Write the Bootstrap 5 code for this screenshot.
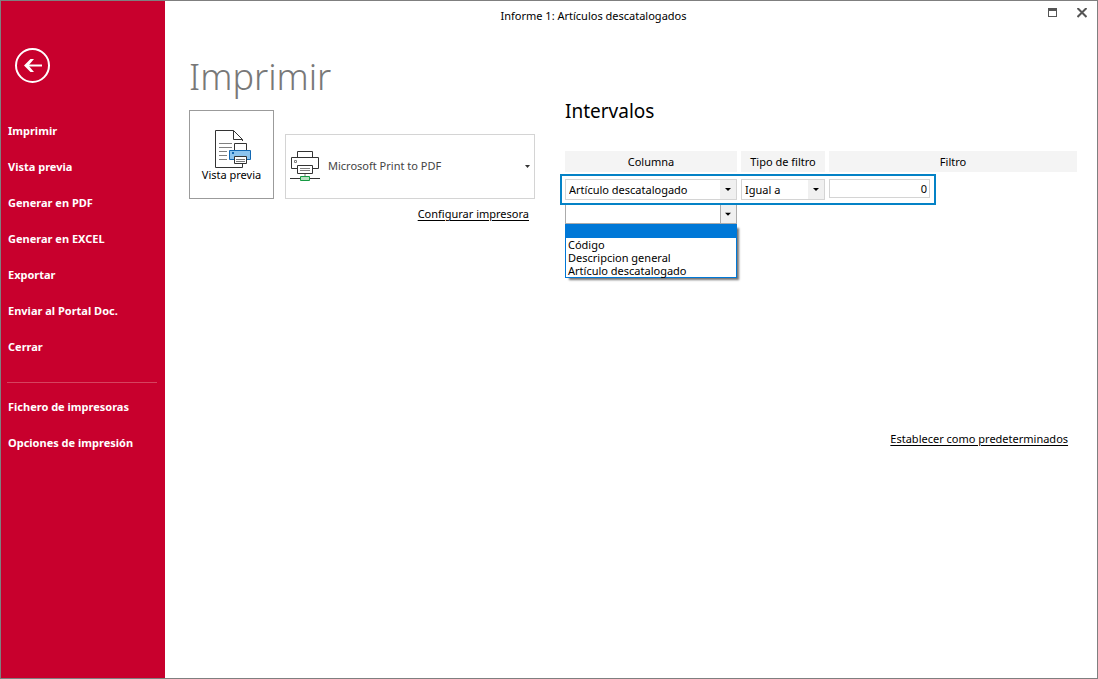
<!DOCTYPE html>
<html lang="es">
<head>
<meta charset="utf-8">
<meta name="viewport" content="width=device-width, initial-scale=1">
<title>Informe 1: Artículos descatalogados</title>
<link href="https://cdn.jsdelivr.net/npm/bootstrap@5.3.0/dist/css/bootstrap.min.css" rel="stylesheet">
<style>
  body { font-family: "Noto Sans", "Open Sans", sans-serif; font-size: 11px; line-height: 18px; color: #000; }
  .app-window { border: 1px solid #7f7f7f; }
  .side-menu { width: 164px; flex-shrink: 0; background: #c8002d; padding-top: 47px; }
  .back-btn { width: 35px; height: 35px; margin: 0 0 30px 14px; }
  .side-menu .nav-link { color: #fff; font-weight: 700; padding: 9px 7px; }
  .side-menu hr { margin: 17px 8px 6px 6px; border-top: 1px solid #e07080; opacity: .6; }
  .title-bar { height: 30px; }
  .window-controls { width: 75px; }
  .window-controls .btn { width: 30px; padding-top: 7px; }
  .content-area { padding: 20px 20px 0 24px; gap: 30px; }
  .print-pane { width: 346px; flex-shrink: 0; }
  .print-pane h1 { font-size: 36px; font-weight: 300; line-height: 48px; color: #787878; margin: 2px 0 9px; }
  .preview-btn { width: 85px; height: 89px; border: 1px solid #9b9b9b; padding: 18px 0 0; font-size: 11px; line-height: 12px; color: #000; }
  .preview-btn svg { margin-left: 2px; }
  .printer-btn { width: 250px; height: 65px; border: 1px solid #d4d4d4; color: #444; font-size: 11px; padding: 0 4px 1px; }
  .config-row { padding: 6px 6px 0 0; }
  .plain-link { color: #000; text-decoration: underline; text-underline-offset: 2px; }
  .filter-pane h2 { font-size: 19px; font-weight: 400; line-height: 28px; margin: 46px 0 26px; }
  .filter-table { width: calc(100% + 8px); margin: 0 -4px; table-layout: fixed; border-collapse: separate; border-spacing: 4px 0; }
  .filter-table th { height: 21px; padding: 0; background: #f4f4f4; font-weight: 400; text-align: center; }
  .filter-table td { padding: 7px 0 0; vertical-align: top; }
  .filter-table tr:last-child td { padding-top: 4px; }
  .col-column { width: 172px; }
  .col-type { width: 84px; }
  .combo { display: block; width: 100%; height: 21px; border: 1px solid #d4d4d4; border-radius: 0; padding: 0 18px 0 3px; appearance: none; color: #000; outline: 0;
    background: url("data:image/svg+xml,%3Csvg xmlns='http://www.w3.org/2000/svg' width='16' height='19'%3E%3Cpath fill='%23f0f0f0' d='M0 0h16v19H0z'/%3E%3Cpath d='M5 8h6L8 11z'/%3E%3C/svg%3E") right center no-repeat #fff; }
  .combo-open { height: 20px; border-color: #ababab;
    background-image: url("data:image/svg+xml,%3Csvg xmlns='http://www.w3.org/2000/svg' width='16' height='19'%3E%3Cpath fill='%23f0f0f0' d='M0 0h16v19H0z'/%3E%3Cpath fill='%23ababab' d='M0 0h1v19H0z'/%3E%3Cpath d='M5 8h6L8 11z'/%3E%3C/svg%3E"); }
  .filter-value { display: block; width: 101px; height: 19px; border: 1px solid #d4d4d4; padding: 0 2px; text-align: right; outline: 0; }
  .row-focus { left: -5px; top: 2px; width: 376px; height: 31px; border: 2px solid #0482c6; pointer-events: none; z-index: 2; }
  .combo-list { left: 0; top: 100%; width: 100%; border: 1px solid #0078d7; box-shadow: 3px 3px 2px -1px rgba(0,0,0,.55); z-index: 3; line-height: 13px; }
  .combo-list li { padding-left: 2px; height: 13px; }
  .combo-list li.chosen { background: #0078d7; }
  .defaults-link { margin: 206px 9px 0 0; }
</style>
</head>
<body>
<div class="app-window d-flex min-vh-100 bg-white">
  <nav class="side-menu" aria-label="Menú de impresión">
    <button type="button" class="back-btn btn p-0 border-0 d-block" aria-label="Volver">
      <svg class="d-block" width="35" height="35" viewBox="0 0 35 35" fill="none" stroke="#fff"><circle cx="17.500" cy="17.500" r="16.500" stroke-width="2"/><path d="M27 17.500H11" stroke-width="2"/><path d="M9 17.500L15.500 11H19L13.500 17.500L19 24H15.500Z" fill="#fff" stroke="none"/></svg>
    </button>
    <div class="nav flex-column">
      <a class="nav-link" href="#">Imprimir</a>
      <a class="nav-link" href="#">Vista previa</a>
      <a class="nav-link" href="#">Generar en PDF</a>
      <a class="nav-link" href="#">Generar en EXCEL</a>
      <a class="nav-link" href="#">Exportar</a>
      <a class="nav-link" href="#">Enviar al Portal Doc.</a>
      <a class="nav-link" href="#">Cerrar</a>
    </div>
    <hr>
    <div class="nav flex-column">
      <a class="nav-link" href="#">Fichero de impresoras</a>
      <a class="nav-link" href="#">Opciones de impresión</a>
    </div>
  </nav>

  <div class="flex-fill">
    <header class="title-bar d-flex align-items-center">
      <div class="flex-fill text-center">Informe 1: Artículos descatalogados</div>
      <div class="window-controls d-flex align-items-start justify-content-end h-100">
        <button type="button" class="btn px-0 pb-0 border-0 rounded-0 d-flex justify-content-center" aria-label="Maximizar"><svg width="10" height="10" viewBox="0 0 10 10" shape-rendering="crispEdges"><path d="M1 0h9v9H1zM2 3v5h7V3z" fill="#555" fill-rule="evenodd"/></svg></button>
        <button type="button" class="btn px-0 pb-0 border-0 rounded-0 d-flex justify-content-center" aria-label="Cerrar ventana"><svg width="10" height="10" viewBox="0 0 10 10"><path d="M.5 0L9.500 9M9.500 0L.5 9" stroke="#555" stroke-width="2"/></svg></button>
      </div>
    </header>

    <main class="content-area d-flex">
      <section class="print-pane">
        <h1>Imprimir</h1>
        <div class="d-flex justify-content-between align-items-end">
          <button type="button" class="preview-btn bg-white d-flex flex-column align-items-center">
            <svg width="37" height="40" viewBox="0 0 37 40" fill="none" stroke="#333">
              <path d="M28.500 12V10.500L19.500 1.500H1.500V38.500H28.500V34" fill="#fff"/>
              <path d="M19.500 1.500V10.500H28.500"/>
              <path d="M5 14.500H18M5 18.500H18M5 22.500H13M5 26.500H13M5 30.500H13" stroke="#808080"/>
              <path d="M20.500 21V14.500H32.500V21" fill="#fff"/>
              <path d="M15.500 21.500H36.500V30.500H15.500Z" fill="#8cc4ee" stroke="#1268b3"/>
              <path d="M18 23h2v2h-2z" fill="#1268b3" stroke="none"/>
              <path d="M20.500 27.500H32.500V34.500H20.500Z" fill="#fff"/>
              <path d="M22 30.500H31M22 32.500H31" stroke="#777"/>
            </svg>
            <span>Vista previa</span>
          </button>
          <button type="button" class="printer-btn bg-white d-flex align-items-center text-start" aria-haspopup="listbox">
            <svg width="30" height="32" viewBox="0 0 30 32" fill="none" stroke="#333">
              <path d="M7.500 7V1.500H22.500V7M7.500 18.500H1.500V7.500H28.500V18.500H22.500"/>
              <path d="M7.500 15.500H22.500V23.500H7.500Z" fill="#fff"/>
              <path d="M4.500 10.500h2v2h-2zM10 18.500H20M10 20.500H20" stroke="#808080"/>
              <path d="M14 24h2v2h-2z" fill="#bbb" stroke="none"/>
              <path d="M0 28.500H30"/>
              <path d="M10.500 26.500H19.500V30.500H10.500Z" fill="#b5dfbf" stroke="#169a43"/>
            </svg>
            <span class="flex-fill ps-2">Microsoft Print to PDF</span>
            <svg width="5" height="3" viewBox="0 0 5 3"><path d="M0 0H5L2.500 3Z" fill="#333"/></svg>
          </button>
        </div>
        <div class="config-row text-end"><a class="plain-link" href="#">Configurar impresora</a></div>
      </section>

      <section class="filter-pane flex-fill">
        <h2>Intervalos</h2>
        <table class="filter-table">
          <colgroup><col class="col-column"><col class="col-type"><col></colgroup>
          <thead><tr><th scope="col">Columna</th><th scope="col">Tipo de filtro</th><th scope="col">Filtro</th></tr></thead>
          <tbody>
            <tr>
              <td class="position-relative">
                <select class="combo" aria-label="Columna"><option>Artículo descatalogado</option><option>Código</option><option>Descripcion general</option></select>
                <div class="row-focus position-absolute"></div>
              </td>
              <td><select class="combo" aria-label="Tipo de filtro"><option>Igual a</option></select></td>
              <td><input class="filter-value" type="text" value="0" aria-label="Filtro"></td>
            </tr>
            <tr>
              <td class="position-relative">
                <select class="combo combo-open" aria-label="Nueva columna"><option></option></select>
                <ul class="combo-list position-absolute bg-white list-unstyled mb-0" role="listbox" aria-label="Columnas disponibles">
                  <li class="chosen" role="option" aria-selected="true"></li>
                  <li role="option">Código</li>
                  <li role="option">Descripcion general</li>
                  <li role="option">Artículo descatalogado</li>
                </ul>
              </td>
              <td></td><td></td>
            </tr>
          </tbody>
        </table>
        <div class="defaults-link text-end"><a class="plain-link" href="#">Establecer como predeterminados</a></div>
      </section>
    </main>
  </div>
</div>
<script src="https://cdn.jsdelivr.net/npm/bootstrap@5.3.0/dist/js/bootstrap.bundle.min.js"></script>
</body>
</html>
